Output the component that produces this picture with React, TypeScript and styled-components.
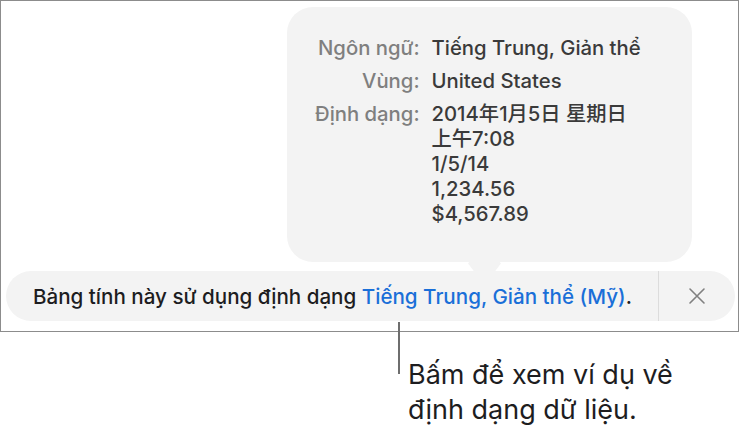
import React from 'react'
import styled, { createGlobalStyle } from 'styled-components'

const GlobalStyle = createGlobalStyle`
    html, body {
        margin: 0;
        padding: 0;
        background: #ffffff;
    }
    body {
        font-family: Inter, 'Noto Sans', 'Noto Sans CJK SC', sans-serif;
        -webkit-font-smoothing: antialiased;
    }
`

const formatRows = [
    { label: 'Ngôn ngữ:', lines: ['Tiếng Trung, Giản thể'] },
    { label: 'Vùng:', lines: ['United States'] },
    {
        label: 'Định dạng:',
        lines: ['2014年1月5日 星期日', '上午7:08', '1/5/14', '1,234.56', '$4,567.89'],
    },
]

const App = () => {
    return (
        <Page>
            <GlobalStyle />
            <Window>
                <Popover>
                    <FormatGrid>
                        {formatRows.map(({ label, lines }) => (
                            <React.Fragment key={label}>
                                <Label>{label}</Label>
                                <Value>
                                    {lines.map((line) => (
                                        <div key={line}>{line}</div>
                                    ))}
                                </Value>
                            </React.Fragment>
                        ))}
                    </FormatGrid>
                </Popover>
                <Banner>
                    <BannerText>
                        Bảng tính này sử dụng định dạng{' '}
                        <FormatLink>Tiếng Trung, Giản thể (Mỹ)</FormatLink>.
                    </BannerText>
                    <CloseButton aria-label="Đóng">
                        <svg width="18" height="18" viewBox="0 0 18 18">
                            <path
                                d="M2 2 L16 16 M16 2 L2 16"
                                stroke="#808080"
                                strokeWidth="1.6"
                                strokeLinecap="round"
                            />
                        </svg>
                    </CloseButton>
                </Banner>
            </Window>
            <Callout>
                <Leader />
                <Caption>
                    Bấm để xem ví dụ về
                    <br />
                    định dạng dữ liệu.
                </Caption>
            </Callout>
        </Page>
    )
}

export default App

const Page = styled.div({
    width: '740px',
    height: '427px',
    overflow: 'hidden',
})

const Window = styled.div({
    boxSizing: 'border-box',
    width: '739px',
    height: '332px',
    border: '1px solid #8c8c8c',
    display: 'flex',
    flexDirection: 'column',
})

// the little pointer under the popover is a rotated square
const Popover = styled.div({
    position: 'relative',
    boxSizing: 'border-box',
    width: '405px',
    height: '255px',
    marginTop: '6px',
    marginLeft: '286px',
    padding: '28px 0 0 28px',
    background: '#f3f3f3',
    borderRadius: '26px',
    '&::after': {
        content: '""',
        position: 'absolute',
        left: '184px',
        bottom: '-15px',
        width: '27px',
        height: '27px',
        background: '#f3f3f3',
        transform: 'rotate(45deg) skew(8deg, 8deg)',
        borderRadius: '0 0 5px 0',
        zIndex: 2,
    },
})

const FormatGrid = styled.div({
    display: 'grid',
    gridTemplateColumns: 'auto auto',
    justifyContent: 'start',
    columnGap: '12px',
    rowGap: '8px',
    fontSize: '20.3px',
    lineHeight: '25px',
    fontWeight: 500,
})

const Label = styled.div({
    textAlign: 'right',
    color: '#7f7f7f',
})

const Value = styled.div({
    color: '#3a3a3a',
})

const Banner = styled.div({
    position: 'relative',
    zIndex: 1,
    boxSizing: 'border-box',
    width: '729px',
    height: '50px',
    marginTop: '9px',
    marginLeft: '5px',
    display: 'flex',
    alignItems: 'center',
    background: '#f3f3f3',
    borderRadius: '25px',
})

const BannerText = styled.div({
    flex: 1,
    paddingLeft: '27px',
    fontSize: '20.6px',
    fontWeight: 500,
    color: '#1d1d1f',
    whiteSpace: 'nowrap',
})

const FormatLink = styled.span({
    color: '#1a6fd8',
})

const CloseButton = styled.div({
    alignSelf: 'stretch',
    width: '76px',
    borderLeft: '1.5px solid #dcdcdc',
    display: 'flex',
    alignItems: 'center',
    justifyContent: 'center',
})

const Callout = styled.div({
    display: 'flex',
    alignItems: 'flex-start',
    marginTop: '-10px',
    marginLeft: '398px',
})

const Leader = styled.div({
    width: '2px',
    height: '52px',
    background: '#6e6e6e',
})

const Caption = styled.div({
    marginTop: '35px',
    marginLeft: '8px',
    fontSize: '27px',
    lineHeight: '35px',
    color: '#1d1d1f',
})
